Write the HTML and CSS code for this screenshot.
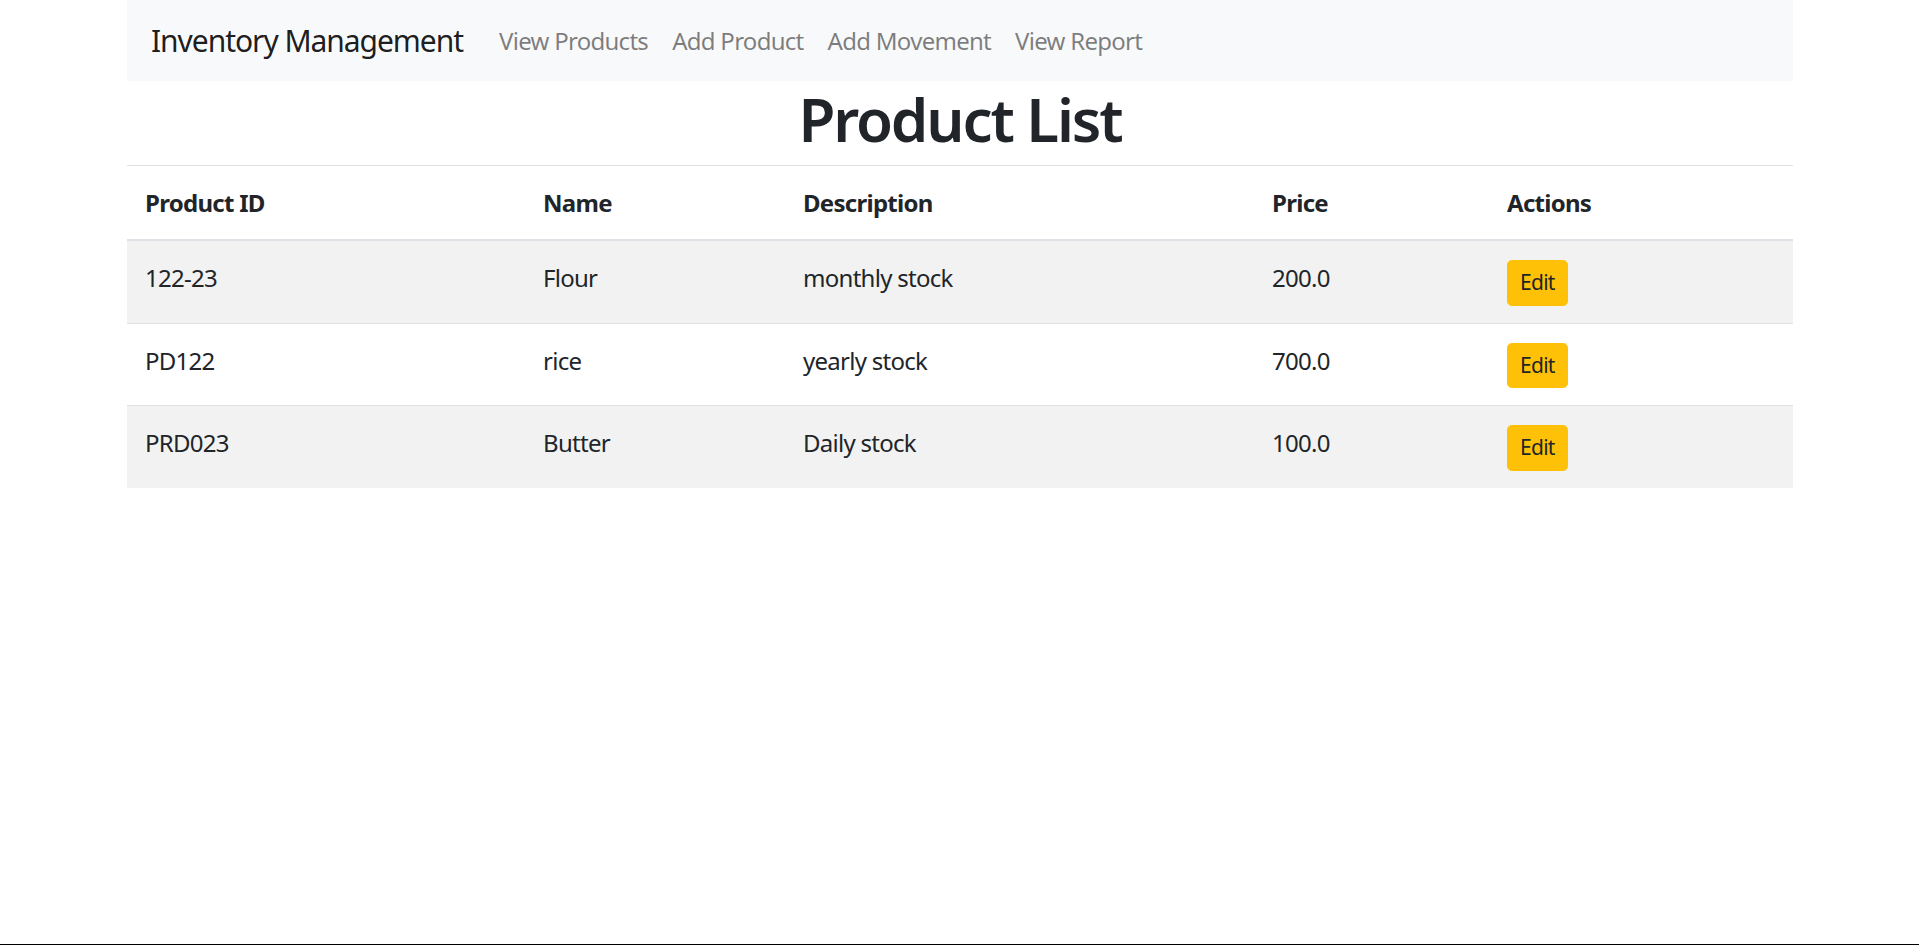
FILE: index.html
```html
<!DOCTYPE html>
<html lang="en">
<head>
<meta charset="utf-8">
<title>Product List</title>
<link rel="stylesheet" href="styles.css">
</head>
<body>
<div class="container">
  <nav class="navbar">
    <a class="brand" href="#">Inventory Management</a>
    <ul class="nav">
      <li><a href="#">View Products</a></li>
      <li><a href="#">Add Product</a></li>
      <li><a href="#">Add Movement</a></li>
      <li><a href="#">View Report</a></li>
    </ul>
  </nav>
  <h1 class="title">Product List</h1>
  <table class="table">
    <thead>
      <tr>
        <th class="c1">Product ID</th>
        <th class="c2">Name</th>
        <th class="c3">Description</th>
        <th class="c4">Price</th>
        <th class="c5">Actions</th>
      </tr>
    </thead>
    <tbody>
      <tr class="odd">
        <td>122-23</td><td>Flour</td><td>monthly stock</td><td>200.0</td>
        <td><a class="btn" href="#">Edit</a></td>
      </tr>
      <tr>
        <td>PD122</td><td>rice</td><td>yearly stock</td><td>700.0</td>
        <td><a class="btn" href="#">Edit</a></td>
      </tr>
      <tr class="odd">
        <td>PRD023</td><td>Butter</td><td>Daily stock</td><td>100.0</td>
        <td><a class="btn" href="#">Edit</a></td>
      </tr>
    </tbody>
  </table>
</div>
<div class="edge"></div>
</body>
</html>
```

FILE: styles.css
```css
* { box-sizing: border-box; }
html, body { margin: 0; padding: 0; }
body {
  font-family: "Noto Sans", "Open Sans", sans-serif;
  font-size: 24px;
  line-height: 1.5;
  letter-spacing: -0.03em;
  color: #212529;
  background: #fff;
}
.container {
  width: 1666px;
  margin-left: 127px;
}
.navbar {
  display: flex;
  align-items: center;
  height: 81px;
  padding: 0 24px;
  background: #f8f9fa;
}
.brand {
  font-size: 30px;
  line-height: 45px;
  letter-spacing: -0.035em;
  color: rgba(0,0,0,.9);
  text-decoration: none;
  margin-right: 24px;
}
.nav {
  display: flex;
  list-style: none;
  margin: 0;
  padding: 0;
}
.nav a {
  display: block;
  padding: 0 12px;
  color: rgba(0,0,0,.5);
  text-decoration: none;
}
.title {
  margin: 0 0 10px;
  padding-top: 2px;
  font-size: 60px;
  line-height: 72px;
  font-weight: 600;
  letter-spacing: -0.035em;
  text-align: center;
}
.table {
  width: 100%;
  border-collapse: collapse;
  table-layout: fixed;
}
.table th, .table td {
  padding: 19px 18px 17px;
  border-top: 1px solid #dee2e6;
  text-align: left;
  vertical-align: top;
}
.table th {
  padding: 19px 18px 18px;
  font-weight: 700;
  vertical-align: bottom;
  border-bottom: 2px solid #dee2e6;
}
.c1 { width: 398px; }
.c2 { width: 260px; }
.c3 { width: 469px; }
.c4 { width: 235px; }
.c5 { width: 304px; }
.odd { background: rgba(0,0,0,.05); }
.btn {
  display: inline-block;
  padding: 6px 12px;
  font-size: 21px;
  line-height: 31.5px;
  border: 1px solid #ffc107;
  border-radius: 4.8px;
  background: #ffc107;
  color: #212529;
  text-decoration: none;
  vertical-align: middle;
}
.edge {
  position: fixed;
  left: 0;
  right: 0;
  bottom: 0;
  height: 1px;
  background: #000;
}
```
